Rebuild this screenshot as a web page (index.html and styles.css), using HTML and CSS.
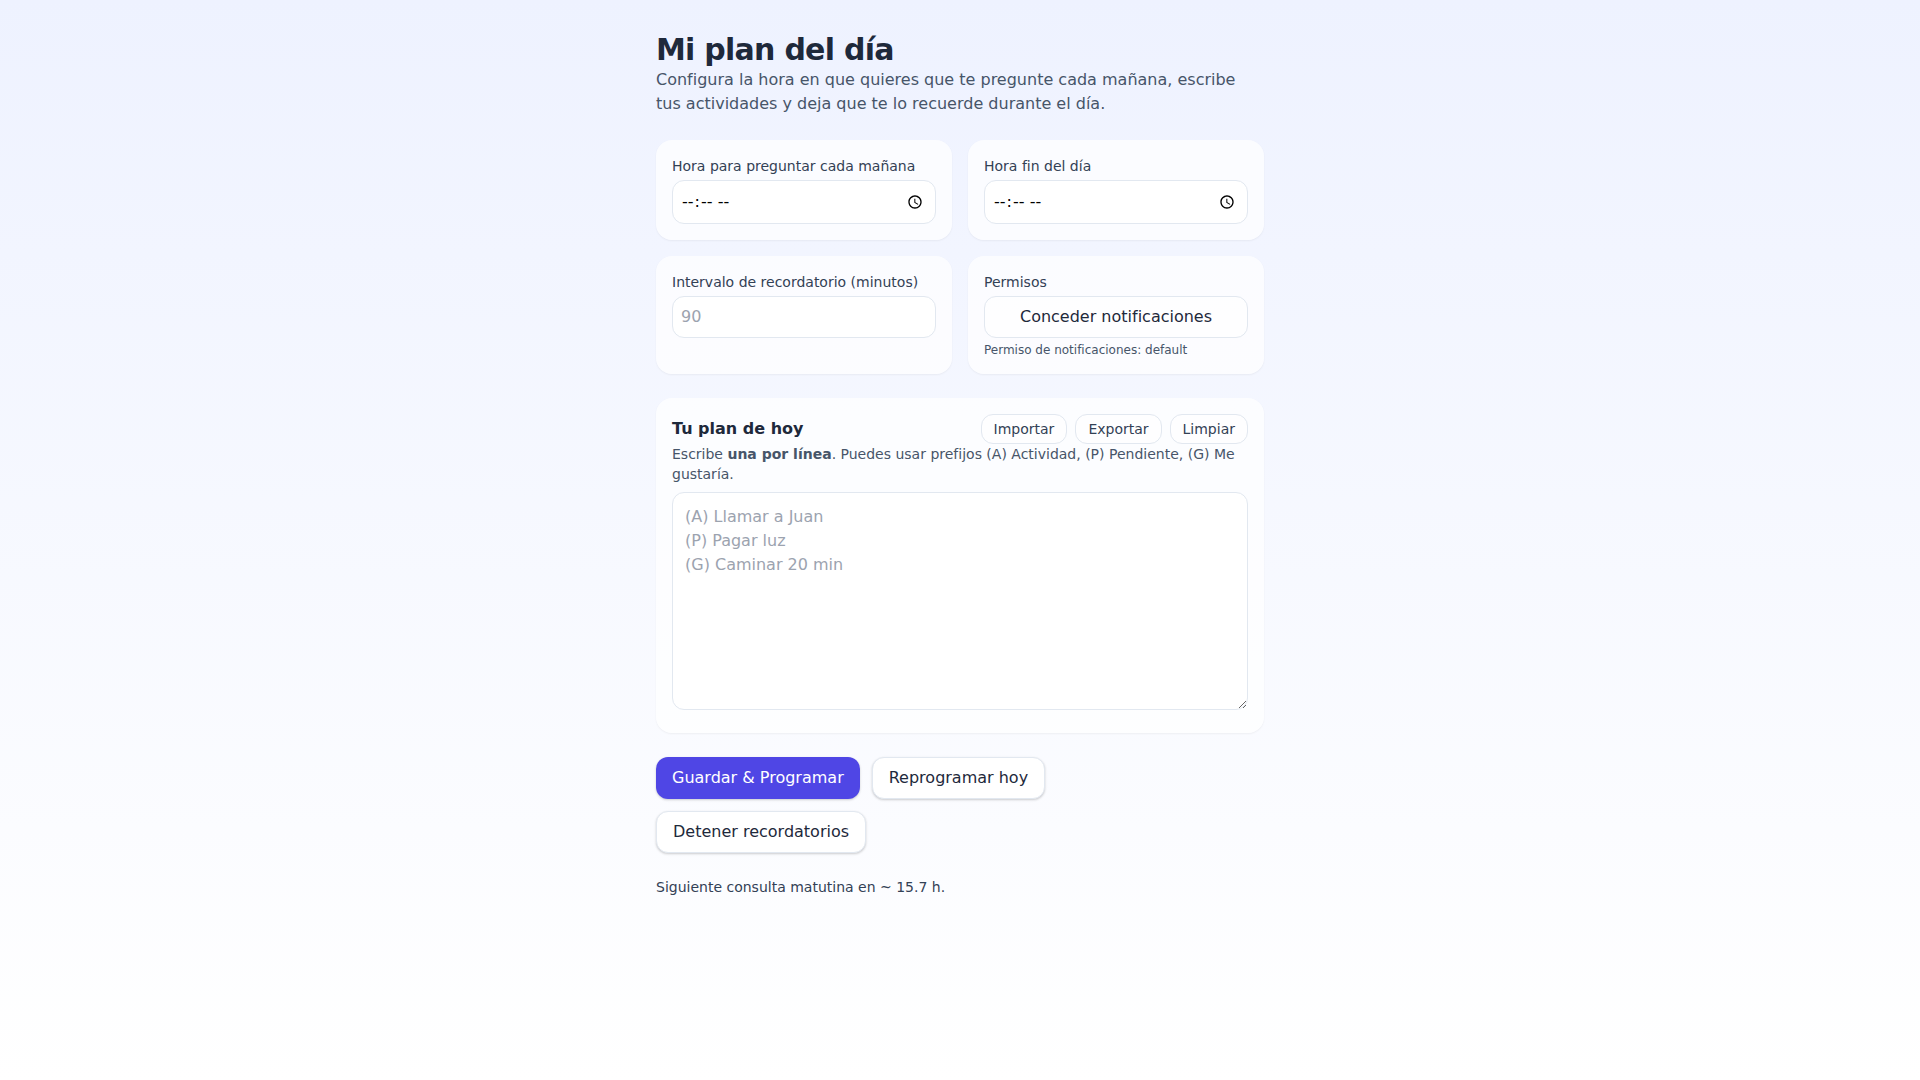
FILE: index.html
```html
<!DOCTYPE html>
<html lang="es">
<head>
    <meta charset="UTF-8">
    <meta name="viewport" content="width=device-width, initial-scale=1.0">
    <title>Mi plan del día</title>
    <link rel="stylesheet" href="styles.css">
</head>

<body>
    <main class="page">
        <header>
            <h1 class="page-title">Mi plan del día</h1>
            <p class="page-intro">Configura la hora en que quieres que te pregunte cada mañana, escribe tus actividades y deja que te lo recuerde durante el día.</p>
        </header>

        <section class="settings-grid">
            <div class="card">
                <label class="field-label" for="morning-time">Hora para preguntar cada mañana</label>
                <input class="field-input" id="morning-time" type="time">
            </div>
            <div class="card">
                <label class="field-label" for="end-time">Hora fin del día</label>
                <input class="field-input" id="end-time" type="time">
            </div>
            <div class="card">
                <label class="field-label" for="interval">Intervalo de recordatorio (minutos)</label>
                <input class="field-input" id="interval" type="number" placeholder="90">
            </div>
            <div class="card">
                <div class="field-label">Permisos</div>
                <button class="permission-btn" type="button">Conceder notificaciones</button>
                <div class="permission-status">Permiso de notificaciones: default</div>
            </div>
        </section>

        <section class="card plan-card">
            <div class="plan-head">
                <h2 class="plan-title">Tu plan de hoy</h2>
                <div class="plan-tools">
                    <button class="tool-btn" type="button">Importar</button>
                    <button class="tool-btn" type="button">Exportar</button>
                    <button class="tool-btn" type="button">Limpiar</button>
                </div>
            </div>
            <p class="plan-help">Escribe <strong>una por línea</strong>. Puedes usar prefijos (A) Actividad, (P) Pendiente, (G) Me gustaría.</p>
            <textarea class="plan-text" rows="8" placeholder="(A) Llamar a Juan&#10;(P) Pagar luz&#10;(G) Caminar 20 min"></textarea>
        </section>

        <div class="actions">
            <button class="action-btn primary" type="button">Guardar &amp; Programar</button>
            <button class="action-btn" type="button">Reprogramar hoy</button>
            <button class="action-btn" type="button">Detener recordatorios</button>
        </div>

        <p class="next-check">Siguiente consulta matutina en ~ 15.7 h.</p>
    </main>
</body>
</html>
```

FILE: styles.css
```css
* {
  box-sizing: border-box;
}

html,
body {
  margin: 0;
  min-height: 100%;
}

body {
  min-height: 100vh;
  background: linear-gradient(to bottom, #eef2ff, #ffffff);
  color: #1e293b;
  font-family: "DejaVu Sans", sans-serif;
  font-size: 16px;
  line-height: 24px;
}

.page {
  max-width: 672px;
  margin: 0 auto;
  padding: 32px;
}

.page-title {
  margin: 0;
  font-size: 30px;
  line-height: 36px;
  font-weight: 700;
  letter-spacing: -0.75px;
}

.page-intro {
  margin: 0;
  color: #475569;
}

.settings-grid {
  display: grid;
  grid-template-columns: 1fr 1fr;
  gap: 16px;
  margin-top: 24px;
}

.card {
  padding: 16px;
  background: rgba(255, 255, 255, 0.7);
  border-radius: 16px;
  box-shadow: 0 1px 2px rgba(0, 0, 0, 0.05);
}

.field-label {
  display: block;
  margin-bottom: 4px;
  color: #334155;
  font-size: 14px;
  line-height: 20px;
}

.field-input {
  display: block;
  width: 100%;
  padding: 8px;
  background: #ffffff;
  border: 1px solid #e2e8f0;
  border-radius: 12px;
  font: inherit;
}

.field-input::placeholder,
.plan-text::placeholder {
  color: #9ca3af;
}

.permission-btn {
  display: block;
  width: 100%;
  padding: 8px 12px;
  background: rgba(255, 255, 255, 0.6);
  border: 1px solid #e2e8f0;
  border-radius: 12px;
  color: #1e293b;
  font: inherit;
}

.permission-status {
  margin-top: 4px;
  color: #475569;
  font-size: 12px;
  line-height: 16px;
}

.plan-card {
  margin-top: 24px;
}

.plan-head {
  display: flex;
  align-items: center;
  justify-content: space-between;
}

.plan-title {
  margin: 0;
  font-size: 16px;
  line-height: 24px;
  font-weight: 600;
}

.plan-tools {
  display: flex;
  gap: 8px;
}

.tool-btn {
  padding: 4px 12px;
  background: rgba(255, 255, 255, 0.6);
  border: 1px solid #e2e8f0;
  border-radius: 12px;
  color: #334155;
  font: inherit;
  font-size: 14px;
  line-height: 20px;
}

.plan-help {
  margin: 0 0 8px;
  color: #475569;
  font-size: 14px;
  line-height: 20px;
}

.plan-help strong {
  font-weight: 600;
}

.plan-text {
  width: 100%;
  padding: 12px;
  background: #ffffff;
  border: 1px solid #e2e8f0;
  border-radius: 12px;
  color: #1e293b;
  font: inherit;
}

.actions {
  display: flex;
  flex-wrap: wrap;
  gap: 12px;
  margin-top: 24px;
}

.action-btn {
  padding: 8px 16px;
  background: #ffffff;
  border: 1px solid #e2e8f0;
  border-radius: 12px;
  box-shadow: 0 1px 3px rgba(0, 0, 0, 0.1), 0 1px 2px rgba(0, 0, 0, 0.1);
  color: #1e293b;
  font: inherit;
}

.action-btn.primary {
  background: #4f46e5;
  border: 0;
  color: #ffffff;
}

.next-check {
  margin: 24px 0 0;
  color: #334155;
  font-size: 14px;
  line-height: 20px;
}
```
